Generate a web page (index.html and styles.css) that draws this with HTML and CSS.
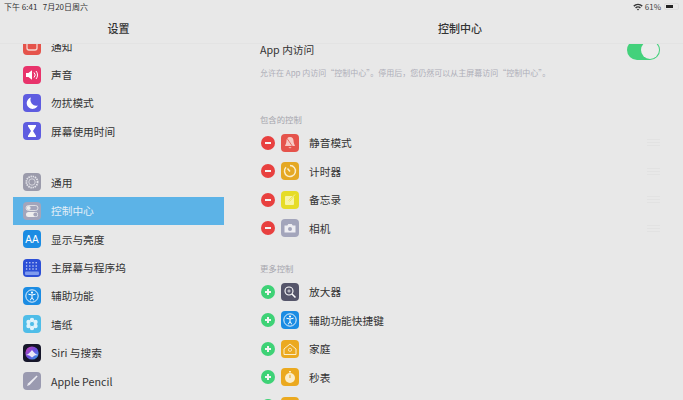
FILE: index.html
```html
<!DOCTYPE html>
<html lang="zh-CN">
<head>
    <meta charset="UTF-8">
    <title>控制中心</title>
    <link rel="stylesheet" href="styles.css">
</head>
<body>
    <div class="status">
        <span class="status-time">下午 6:41&nbsp;&nbsp;&nbsp;7月20日周六</span>
        <div class="status-right">
            <svg width="10" height="8" viewBox="0 0 10 8"><path d="M0.3 2.6a6.6 6.6 0 0 1 9.4 0L8.7 3.7a5.1 5.1 0 0 0-7.4 0z" fill="#333"/><path d="M2.1 4.4a4 4 0 0 1 5.8 0L6.9 5.5a2.6 2.6 0 0 0-3.8 0z" fill="#333"/><path d="M3.9 6.2a1.6 1.6 0 0 1 2.2 0L5 7.5z" fill="#333"/></svg>
            <span>61%</span>
            <span class="battery"><span class="battery-fill"></span></span>
        </div>
    </div>
    <div class="panes">
        <aside class="sidebar">
            <div class="pane-title">设置</div>
            <div class="side-list">
                <div class="side-row">
                    <svg class="icon" viewBox="0 0 18 18"><rect width="18" height="18" rx="4" fill="#e5534b"/><rect x="4" y="3" width="10" height="10" rx="2" fill="none" stroke="#f6d5d0" stroke-width="1.3"/></svg>
                    <span>通知</span>
                </div>
                <div class="side-row">
                    <svg class="icon" viewBox="0 0 18 18"><rect width="18" height="18" rx="4" fill="#e8336b"/><path d="M3 7h2.400L9 4.200v9.600L5.400 11H3z" fill="#fff"/><path d="M11 6.500a3.500 3.500 0 0 1 0 5M13 5a6 6 0 0 1 0 8" fill="none" stroke="#fff" stroke-width="1"/></svg>
                    <span>声音</span>
                </div>
                <div class="side-row">
                    <svg class="icon" viewBox="0 0 18 18"><rect width="18" height="18" rx="4" fill="#5e5ce0"/><path d="M8 3.500a5.800 5.800 0 1 0 6.800 8A5.800 5.800 0 0 1 8 3.500z" fill="#fff"/></svg>
                    <span>勿扰模式</span>
                </div>
                <div class="side-row">
                    <svg class="icon" viewBox="0 0 18 18"><rect width="18" height="18" rx="4" fill="#5e5ce0"/><path d="M5 3h8v1.200L10 9l3 4.800V15H5v-1.200L8 9 5 4.200z" fill="#fff"/></svg>
                    <span>屏幕使用时间</span>
                </div>
                <div class="side-row group-start">
                    <svg class="icon" viewBox="0 0 18 18"><rect width="18" height="18" rx="4" fill="#9b9bab"/><circle cx="9" cy="9" r="5.600" fill="none" stroke="#e4e4ea" stroke-width="1.800" stroke-dasharray="1.400 0.800"/><circle cx="9" cy="9" r="3.200" fill="none" stroke="#e4e4ea" stroke-width="0.800"/></svg>
                    <span>通用</span>
                </div>
                <div class="side-row selected">
                    <svg class="icon" viewBox="0 0 18 18"><rect width="18" height="18" rx="4" fill="#a3a5bb"/><rect x="3" y="3.500" width="12" height="5" rx="2.500" fill="none" stroke="#eee" stroke-width="0.800"/><circle cx="5.600" cy="6" r="2" fill="#eee"/><rect x="3" y="10" width="12" height="5" rx="2.500" fill="#eee"/><circle cx="12.400" cy="12.500" r="2" fill="#a3a5bb"/></svg>
                    <span>控制中心</span>
                </div>
                <div class="side-row">
                    <svg class="icon" viewBox="0 0 18 18"><rect width="18" height="18" rx="4" fill="#1b8ce3"/><text x="9" y="12.600" class="aa">AA</text></svg>
                    <span>显示与亮度</span>
                </div>
                <div class="side-row">
                    <svg class="icon" viewBox="0 0 18 18"><rect width="18" height="18" rx="4" fill="#2c4fd6"/><g fill="#cfd8f7"><circle cx="3.600" cy="3.800" r=".8"/><circle cx="6.800" cy="3.800" r=".8"/><circle cx="10" cy="3.800" r=".8"/><circle cx="13.200" cy="3.800" r=".8"/><circle cx="3.600" cy="7" r=".8"/><circle cx="6.800" cy="7" r=".8"/><circle cx="10" cy="7" r=".8"/><circle cx="13.200" cy="7" r=".8"/><circle cx="3.600" cy="10" r=".8"/><circle cx="6.800" cy="10" r=".8"/><circle cx="10" cy="10" r=".8"/><circle cx="13.200" cy="10" r=".8"/></g><rect x="2" y="12.500" width="14" height="3.600" rx="1" fill="#7f9bee"/></svg>
                    <span>主屏幕与程序坞</span>
                </div>
                <div class="side-row">
                    <svg class="icon" viewBox="0 0 18 18"><rect width="18" height="18" rx="4" fill="#1b8ce3"/><circle cx="9" cy="9" r="6.200" fill="none" stroke="#fff" stroke-width="0.900"/><circle cx="9" cy="5.600" r="1.100" fill="#fff"/><path d="M5.400 7.200L9 8l3.600-.8M9 8v2.400M9 10.400l-1.800 3M9 10.400l1.800 3" fill="none" stroke="#fff" stroke-width="1"/></svg>
                    <span>辅助功能</span>
                </div>
                <div class="side-row">
                    <svg class="icon" viewBox="0 0 18 18"><rect width="18" height="18" rx="4" fill="#4fbde8"/><g fill="#dff3fb"><circle cx="9" cy="5" r="2.200"/><circle cx="9" cy="13" r="2.200"/><circle cx="5.500" cy="7" r="2.200"/><circle cx="12.500" cy="7" r="2.200"/><circle cx="5.500" cy="11" r="2.200"/><circle cx="12.500" cy="11" r="2.200"/></g><circle cx="9" cy="9" r="1.600" fill="#4fbde8"/></svg>
                    <span>墙纸</span>
                </div>
                <div class="side-row">
                    <svg class="icon" viewBox="0 0 18 18"><defs><linearGradient id="siri" x1="0" y1="0" x2="1" y2="1"><stop offset="0" stop-color="#d23fb0"/><stop offset="0.500" stop-color="#6a4fe0"/><stop offset="1" stop-color="#2fa8e8"/></linearGradient></defs><rect width="18" height="18" rx="4" fill="#16162a"/><circle cx="9" cy="9" r="6.600" fill="url(#siri)"/><path d="M2.800 11c2.200-.4 3.600-2 6.200-5 2.400 3 4 4.600 6.200 5-2 .4-3.400.2-4.200 1L9 13.600 7 12c-.8-.8-2.200-.6-4.200-1z" fill="#e8e8f6"/></svg>
                    <span>Siri 与搜索</span>
                </div>
                <div class="side-row">
                    <svg class="icon" viewBox="0 0 18 18"><rect width="18" height="18" rx="4" fill="#9a9ab0"/><path d="M13.600 3.400l1 1L6.600 13 4 14l1-2.600z" fill="#ececf2"/></svg>
                    <span>Apple Pencil</span>
                </div>
            </div>
        </aside>
        <main class="detail">
            <div class="pane-title">控制中心</div>
            <div class="detail-body">
                <div class="access-row">
                    <span>App 内访问</span>
                    <span class="toggle"><span class="knob"></span></span>
                </div>
                <p class="note">允许在 App 内访问“控制中心”。停用后，您仍然可以从主屏幕访问“控制中心”。</p>

                <div class="section-label first">包含的控制</div>
                <div class="ctl-row">
                    <span class="badge minus"></span>
                    <svg class="icon" viewBox="0 0 18 18"><rect width="18" height="18" rx="4" fill="#e5534b"/><path d="M9 3c2.600 0 3.600 2 3.600 4.400 0 2.400 1.400 3.600 1.400 4.600H4c0-1 1.400-2.200 1.400-4.600C5.400 5 6.400 3 9 3z" fill="#f7c9c3"/><path d="M7.500 13.200a1.600 1.600 0 0 0 3 0z" fill="#f7c9c3"/><path d="M5 3l8 11.500" stroke="#e5534b" stroke-width="0.800"/></svg>
                    <span class="ctl-name">静音模式</span>
                    <span class="handle"></span>
                </div>
                <div class="ctl-row">
                    <span class="badge minus"></span>
                    <svg class="icon" viewBox="0 0 18 18"><rect width="18" height="18" rx="4" fill="#e5a823"/><path d="M9 3.500a5.500 5.500 0 1 1-4 1.700" fill="none" stroke="#fbeecb" stroke-width="1.500"/><path d="M9 9.500L6.500 6.500" stroke="#fbeecb" stroke-width="1.500"/></svg>
                    <span class="ctl-name">计时器</span>
                    <span class="handle"></span>
                </div>
                <div class="ctl-row">
                    <span class="badge minus"></span>
                    <svg class="icon" viewBox="0 0 18 18"><rect width="18" height="18" rx="4" fill="#e6dc28"/><rect x="4" y="5" width="9" height="9" rx="1" fill="#f8f4a8"/><path d="M8 10l6-6.500" stroke="#e6dc28" stroke-width="1.600"/><path d="M8 10l6-6.500" stroke="#fdfbd6" stroke-width="0.700"/></svg>
                    <span class="ctl-name">备忘录</span>
                    <span class="handle"></span>
                </div>
                <div class="ctl-row">
                    <span class="badge minus"></span>
                    <svg class="icon" viewBox="0 0 18 18"><rect width="18" height="18" rx="4" fill="#a3a5bb"/><path d="M3.500 6.500h2.800l1-1.500h3.400l1 1.500h2.800v7h-11z" fill="#eeeef3"/><circle cx="9" cy="10" r="2" fill="#a3a5bb"/></svg>
                    <span class="ctl-name">相机</span>
                    <span class="handle"></span>
                </div>

                <div class="section-label">更多控制</div>
                <div class="ctl-row">
                    <span class="badge plus"></span>
                    <svg class="icon" viewBox="0 0 18 18"><rect width="18" height="18" rx="4" fill="#55556a"/><circle cx="8" cy="8" r="4" fill="none" stroke="#fff" stroke-width="1.100"/><path d="M11 11l3.500 3.500" stroke="#fff" stroke-width="1.500"/><path d="M6.300 8h3.400M8 6.300v3.400" stroke="#fff" stroke-width="0.700"/></svg>
                    <span class="ctl-name">放大器</span>
                </div>
                <div class="ctl-row">
                    <span class="badge plus"></span>
                    <svg class="icon" viewBox="0 0 18 18"><rect width="18" height="18" rx="4" fill="#1b8ce3"/><circle cx="9" cy="9" r="6.200" fill="none" stroke="#fff" stroke-width="0.900"/><circle cx="9" cy="5.600" r="1.100" fill="#fff"/><path d="M5.400 7.200L9 8l3.600-.8M9 8v2.400M9 10.400l-1.800 3M9 10.400l1.800 3" fill="none" stroke="#fff" stroke-width="1"/></svg>
                    <span class="ctl-name">辅助功能快捷键</span>
                </div>
                <div class="ctl-row">
                    <span class="badge plus"></span>
                    <svg class="icon" viewBox="0 0 18 18"><rect width="18" height="18" rx="4" fill="#eba91f"/><path d="M3 9l6-5 6 5v5.500H3z" fill="none" stroke="#fbeecb" stroke-width="1"/><circle cx="9" cy="9.800" r="1.600" fill="none" stroke="#fbeecb" stroke-width="0.800"/></svg>
                    <span class="ctl-name">家庭</span>
                </div>
                <div class="ctl-row">
                    <span class="badge plus"></span>
                    <svg class="icon" viewBox="0 0 18 18"><rect width="18" height="18" rx="4" fill="#eba91f"/><circle cx="9" cy="10" r="5" fill="#fbeecb"/><rect x="8" y="3" width="2" height="1.500" fill="#fbeecb"/><path d="M9 10V6.800" stroke="#eba91f" stroke-width="1"/></svg>
                    <span class="ctl-name">秒表</span>
                </div>
                <div class="ctl-row">
                    <span class="badge plus"></span>
                    <svg class="icon" viewBox="0 0 18 18"><rect width="18" height="18" rx="4" fill="#eba91f"/></svg>
                    <span class="ctl-name"></span>
                </div>
            </div>
        </main>
    </div>
</body>
</html>
```

FILE: styles.css
```css
html, body {
    margin: 0;
    padding: 0;
    height: 400px;
    overflow: hidden;
}
body {
    display: flex;
    flex-direction: column;
    background-color: #e8e8e8;
    color: #333;
    font-family: "Noto Sans CJK SC", "Liberation Sans", sans-serif;
    font-size: 10.7px;
}
.status {
    display: flex;
    justify-content: space-between;
    align-items: center;
    height: 13px;
    padding: 0 4px;
    font-size: 8px;
    line-height: 13px;
}
.status-right {
    display: flex;
    align-items: center;
    gap: 2px;
    color: #444;
}
.battery {
    display: block;
    box-sizing: border-box;
    width: 15px;
    height: 7px;
    margin-left: 1px;
    padding: 1px;
    border: 1px solid #ddd;
    border-radius: 2px;
}
.battery-fill {
    display: block;
    width: 60%;
    height: 100%;
    background-color: #222;
}
.panes {
    display: flex;
    flex: 1;
    min-height: 0;
}
.sidebar {
    display: flex;
    flex-direction: column;
    width: 237px;
}
.detail {
    display: flex;
    flex-direction: column;
    flex: 1;
}
.pane-title {
    flex: none;
    height: 31px;
    border-bottom: 1px solid #e3e3e3;
    box-sizing: border-box;
    font-size: 11px;
    font-weight: 500;
    line-height: 31px;
    text-align: center;
}
.side-list, .detail-body {
    flex: 1;
    min-height: 0;
    overflow: hidden;
}
.side-row, .ctl-row {
    display: flex;
    align-items: center;
    height: 28.4px;
}
.side-row {
    gap: 10px;
    margin: 0 13px;
    padding-left: 10px;
}
.side-row:first-child {
    margin-top: -12px;
}
.group-start {
    margin-top: 22.6px;
}
.selected {
    background-color: #5cb3e7;
    color: #e4eff7;
}
.icon {
    display: block;
    flex: none;
    width: 18px;
    height: 18px;
}
.aa {
    fill: #fff;
    font-family: "Liberation Sans", sans-serif;
    font-size: 10px;
    text-anchor: middle;
}
.detail-body {
    padding: 0 23px;
}
.access-row {
    display: flex;
    justify-content: space-between;
    align-items: center;
    height: 28.4px;
    margin-top: -8.7px;
}
.toggle {
    display: block;
    position: relative;
    width: 33px;
    height: 20px;
    border-radius: 10px;
    background-color: #43d17b;
}
.knob {
    position: absolute;
    top: 1px;
    right: 1px;
    width: 18px;
    height: 18px;
    border-radius: 50%;
    background-color: #ececec;
}
.note {
    margin: 3px 0 0;
    color: #aeaeb8;
    font-size: 8px;
    line-height: 12px;
}
.section-label {
    height: 12px;
    margin: 19.5px 0 4px;
    color: #a5a5ad;
    font-size: 8.4px;
    line-height: 12px;
}
.section-label.first {
    margin-top: 34px;
}
.ctl-row {
    position: relative;
    padding-left: 1px;
}
.badge {
    position: relative;
    flex: none;
    width: 14px;
    height: 14px;
    margin-right: 6px;
    border-radius: 50%;
}
.minus {
    background-color: #e8403f;
}
.plus {
    background-color: #3ed276;
}
.badge::before, .plus::after {
    content: "";
    position: absolute;
    top: 6px;
    left: 4px;
    width: 6px;
    height: 2px;
    background-color: #f4f4f4;
}
.plus::after {
    transform: rotate(90deg);
}
.ctl-name {
    margin-left: 10px;
}
.handle {
    width: 13px;
    height: 5px;
    margin-left: auto;
    border-top: 1px solid #e2e2e2;
    border-bottom: 1px solid #e2e2e2;
    background: linear-gradient(#e2e2e2, #e2e2e2) center / 100% 1px no-repeat;
}
```
